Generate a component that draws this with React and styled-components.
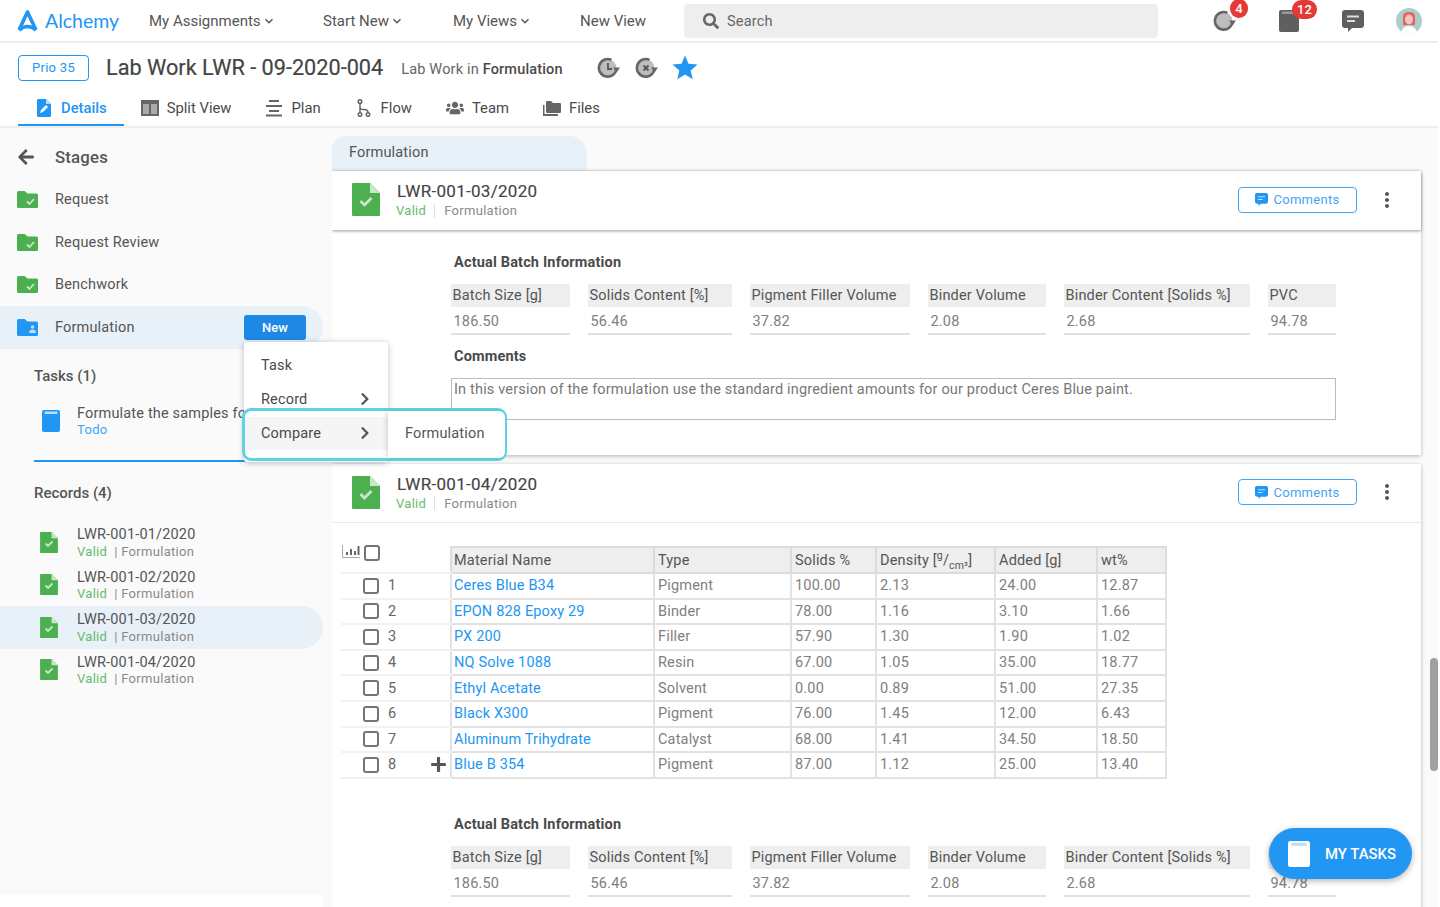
import styled, {createGlobalStyle} from "styled-components";
import {MdKeyboardArrowDown, MdMoreVert, MdStar} from "react-icons/md";
import {
  FaArrowLeft,
  FaChevronRight,
  FaPlus,
  FaSearch,
  FaUsers,
} from "react-icons/fa";

const GlobalStyle = createGlobalStyle`
  html, body {
    margin: 0;
    padding: 0;
    height: 100%;
    overflow: hidden;
    background: #fff;
  }

  body {
    font-family: Roboto, "Liberation Sans", sans-serif;
    color: #4a4a4a;
    font-size: 14.5px;
    letter-spacing: 0.17px;
  }

  * {
    box-sizing: border-box;
  }
`;

const Page = styled.div`
  position: relative;
  width: 1438px;
  height: 907px;
  overflow: hidden;
  display: flex;
  flex-direction: column;
`;

const TopBar = styled.header`
  height: 43px;
  flex: none;
  display: flex;
  align-items: center;
  border-bottom: 2px solid #eee;
  padding-left: 17px;
`;

const Logo = styled.div`
  width: 132px;
  margin-top: -1px;
  display: flex;
  align-items: center;
  gap: 7px;
  color: #2196f3;
  font-family: Lato, Roboto, sans-serif;
  font-size: 19.5px;
  letter-spacing: 0;
`;

const NavItem = styled.div`
  width: ${(p) => p.$width}px;
  display: flex;
  align-items: center;
  font-size: 15px;
  letter-spacing: 0;
  white-space: nowrap;
  color: #555;
`;

const SearchBox = styled.div`
  width: 474px;
  height: 34px;
  margin-left: -26px;
  padding-left: 19px;
  background: #eee;
  border-radius: 4px;
  display: flex;
  align-items: center;
  gap: 8px;
  color: #666;

  & span {
    margin-top: 2px;
  }
`;

const TopIcons = styled.div`
  margin-left: 55px;
  display: flex;
  align-items: center;
`;

const TopIcon = styled.div`
  position: relative;
  width: ${(p) => p.$width}px;
  display: flex;
`;

const Badge = styled.span`
  position: absolute;
  top: -10px;
  left: ${(p) => p.$left}px;
  width: ${(p) => p.$width}px;
  height: 19px;
  border-radius: 10px;
  background: #e53935;
  color: #fff;
  font-size: 13px;
  font-weight: 500;
  letter-spacing: 0;
  display: flex;
  align-items: center;
  justify-content: center;
`;

const SubHeader = styled.div`
  height: 85px;
  flex: none;
  border-bottom: 2px solid #eee;
  display: flex;
  flex-direction: column;
`;

const TitleRow = styled.div`
  height: 49px;
  padding-left: 18px;
  display: flex;
  align-items: center;
`;

const Prio = styled.div`
  width: 71px;
  height: 26px;
  border: 1px solid #2196f3;
  border-radius: 4px;
  color: #2196f3;
  font-size: 13px;
  letter-spacing: 0.3px;
  display: flex;
  align-items: center;
  justify-content: center;
`;

const PageTitle = styled.h1`
  margin: 0 0 0 17px;
  font-size: 21.7px;
  font-weight: 400;
  letter-spacing: 0;
  color: #444;
  -webkit-text-stroke: 0.2px #444;
`;

const PageState = styled.div`
  margin: 3px 0 0 18px;
  font-size: 14.5px;
  color: #666;

  & b {
    font-weight: 500;
    color: #4a4a4a;
  }
`;

const StateIcons = styled.div`
  margin-left: 34px;
  display: flex;
  align-items: center;
  gap: 14px;

  & > svg:last-child {
    margin-left: -3px;
  }
`;

const TabRow = styled.nav`
  display: flex;
  padding-left: 18px;
  height: 34px;
`;

const Tab = styled.div`
  padding: 0 17px;
  display: flex;
  align-items: center;
  gap: 8px;
  font-size: 14.8px;
  letter-spacing: 0;
  color: ${(p) => (p.$active ? "#2196f3" : "#4a4a4a")};
  border-bottom: 2px solid ${(p) => (p.$active ? "#2196f3" : "transparent")};
  font-weight: ${(p) => (p.$active ? 500 : 400)};
`;

const Content = styled.div`
  flex: 1;
  display: flex;
  min-height: 0;
  background: #fafafa;
`;

const Sidebar = styled.aside`
  width: 332px;
  flex: none;
  padding-top: 8px;
  position: relative;
  z-index: 2;

  &::after {
    content: "";
    position: absolute;
    left: 0;
    bottom: 0;
    width: 323px;
    height: 12px;
    background: #fff;
  }
`;

const StagesHead = styled.div`
  height: 42.5px;
  padding-left: 17px;
  display: flex;
  align-items: center;
  gap: 20px;
  font-size: 16.8px;
  font-weight: 500;
  color: #555;
`;

const StageRow = styled.div`
  position: relative;
  width: 323px;
  height: 42.6px;
  padding-left: 17px;
  display: flex;
  align-items: center;
  gap: 17px;
  background: ${(p) => (p.$active ? "#e8f0f8" : "transparent")};
  border-radius: 0 22px 22px 0;
  color: #555;
`;

const NewButton = styled.div`
  position: absolute;
  left: 244px;
  top: 9px;
  width: 62px;
  height: 25px;
  background: #1e88e5;
  color: #fff;
  border-radius: 3px;
  font-size: 13px;
  font-weight: 500;
  letter-spacing: 0;
  display: flex;
  align-items: center;
  justify-content: center;
`;

const Menu = styled.div`
  position: absolute;
  left: 244px;
  top: 36px;
  width: 144px;
  height: 120px;
  padding-top: 6px;
  background: #fff;
  border-radius: 3px;
  box-shadow: 0 1px 6px rgba(0, 0, 0, 0.25);
`;

const MenuItem = styled.div`
  height: 34px;
  padding: 0 16px 0 17px;
  display: flex;
  align-items: center;
  justify-content: space-between;
  color: #4a4a4a;
`;

const Highlight = styled.div`
  margin: -8px 0 0 -2px;
  width: 265px;
  height: 53px;
  border: 3px solid #5fd3e2;
  border-radius: 9px;
  display: flex;
  align-items: center;
  background: #fff;
`;

const CompareItem = styled(MenuItem)`
  width: 143px;
  height: 33px;
  margin-bottom: 3px;
  padding: 0 16px 0 16px;
  background: #f5f5f5;
`;

const SubItem = styled.div`
  align-self: stretch;
  flex: 1;
  margin-right: -1px;
  padding: 0 0 3px 17px;
  display: flex;
  align-items: center;
  background: #fff;
  border-radius: 0 6px 6px 0;
  box-shadow: -2px 0 4px rgba(0, 0, 0, 0.12);
`;

const SectionLabel = styled.div`
  padding-left: 34px;
  font-size: 15px;
  font-weight: 500;
  letter-spacing: 0;
  color: #555;
  margin-top: ${(p) => p.$top}px;
`;

const TaskItem = styled.div`
  margin: 21px 0 0 34px;
  width: 278px;
  height: 56px;
  padding: 0 0 8px 8px;
  border-bottom: 2px solid #2196f3;
  display: flex;
  align-items: flex-start;
  gap: 17px;
  white-space: nowrap;
  overflow: hidden;

  & > svg {
    margin-top: 4px;
    flex: none;
  }
`;

const ItemText = styled.div`
  display: flex;
  flex-direction: column;
  line-height: 16.5px;
  color: #555;
`;

const RecordText = styled(ItemText)`
  margin-top: 3px;
`;

const TodoText = styled.span`
  color: #42a5f5;
  font-size: 13px;
  letter-spacing: 0.3px;
`;

const RecordList = styled.div`
  margin-top: 19px;
`;

const RecordRow = styled.div`
  width: 323px;
  height: 42.6px;
  padding-left: 40px;
  display: flex;
  align-items: center;
  gap: 19px;
  background: ${(p) => (p.$active ? "#e8f0f8" : "transparent")};
  border-radius: 0 22px 22px 0;
`;

const SubLine = styled.div`
  font-size: 13px;
  letter-spacing: 0.3px;
  color: #8a8a8a;
  white-space: nowrap;
`;

const Valid = styled.span`
  color: #66bb6a;
`;

const Main = styled.main`
  flex: 1;
  min-width: 0;
  padding: 8px 17px 0 0;
  overflow: hidden;
`;

const StageTab = styled.div`
  width: 255px;
  height: 35px;
  padding: 0 0 2px 17px;
  background: #e8f0f8;
  border-radius: 14px 18px 0 0;
  display: flex;
  align-items: center;
  color: #555;
`;

const Card = styled.section`
  background: #fff;
  box-shadow: 0 1px 4px rgba(0, 0, 0, 0.28);
  margin-bottom: 9px;
`;

const CardHeader = styled.div`
  height: ${(p) => (p.$raised ? 59 : 58)}px;
  padding: 0 22px 2px 20px;
  display: flex;
  align-items: center;
  gap: 17px;
  box-shadow: ${(p) =>
    p.$raised ? "0 1px 3px rgba(0,0,0,.4)" : "0 1px 0 #e8e8e8"};
`;

const CardName = styled.div`
  font-size: 17px;
  letter-spacing: 0.3px;
  color: #444;
  margin-bottom: 2px;
  -webkit-text-stroke: 0.15px #444;
`;

const CardMeta = styled(SubLine)`
  margin-left: -1px;
  display: flex;
  align-items: center;
`;

const MetaDivider = styled.i`
  width: 1px;
  height: 14px;
  margin: 0 9px 0 8px;
  background: #ddd;
`;

const CommentsButton = styled.div`
  margin-left: auto;
  width: 119px;
  height: 26px;
  border: 1.5px solid #42a5f5;
  border-radius: 4px;
  color: #42a5f5;
  font-size: 13px;
  letter-spacing: 0.3px;
  display: flex;
  align-items: center;
  justify-content: center;
  gap: 5px;
`;

const Kebab = styled.div`
  width: 24px;
  margin-left: 1px;
  display: flex;
  justify-content: center;
  color: #555;
`;

const CardBody = styled.div`
  padding: ${(p) => p.$padding};
`;

const FieldBlock = styled.div`
  margin-left: 119px;
`;

const BlockTitle = styled.h3`
  margin: ${(p) => p.$top || 0}px 0 0;
  padding-left: 3px;
  height: 20px;
  line-height: 20px;
  font-size: 14.5px;
  font-weight: 700;
  color: #4a4a4a;
`;

const FieldGrid = styled.div`
  margin-top: 11px;
  display: grid;
  grid-template-columns: 119px 144px 160px 118px 186px 68px;
  column-gap: 18px;
`;

const FieldLabel = styled.div`
  height: 23px;
  padding-left: 1.5px;
  background: #eee;
  display: flex;
  align-items: center;
  white-space: nowrap;
  color: #555;
`;

const FieldValue = styled.div`
  margin-top: 3px;
  height: 25px;
  padding-left: 2.5px;
  border-bottom: 2px solid #e0e0e0;
  color: #808080;
  display: flex;
  align-items: center;
`;

const CommentBox = styled.div`
  margin-top: 11px;
  width: 885px;
  height: 42px;
  border: 1px solid #bbb;
  padding: 2px;
  line-height: 18px;
  color: #777;
`;

const Table = styled.table`
  margin-left: 9px;
  width: 825px;
  table-layout: fixed;
  border-collapse: collapse;
  font-weight: 400;
`;

const HeadCell = styled.th`
  height: 26px;
  padding: 0 2px 0 3px;
  background: #eee;
  border: 2px solid #dcdcdc;
  font-weight: 400;
  text-align: left;
  color: #555;
  white-space: nowrap;

  &:nth-child(2) {
    padding-left: 2px;
  }

  & sup,
  & sub {
    font-size: 10.5px;
    line-height: 0;
  }
`;

const GutterHead = styled.th`
  border-bottom: 2px solid #f2f2f2;
  padding: 0;
`;

const GutterHeadInner = styled.div`
  margin-top: -14px;
  display: flex;
  align-items: flex-start;
  gap: 4px;
  padding-left: 1px;
`;

const GutterCell = styled.td`
  height: 25.6px;
  padding: 0 3px 0 22px;
  border-bottom: 2px solid #f2f2f2;
`;

const GutterInner = styled.div`
  display: flex;
  align-items: center;
  gap: 9px;
  color: #666;
`;

const AddRow = styled.span`
  margin-left: auto;
  display: flex;
  color: #555;
`;

const Check = styled.span`
  flex: none;
  width: 16px;
  height: 16px;
  border: 2px solid #757575;
  border-radius: 3px;
`;

const DataCell = styled.td`
  height: 25.6px;
  padding: 0 2px 0 ${(p) => (p.$link ? 2 : 3)}px;
  border: 2px solid #e2e2e2;
  color: ${(p) => (p.$link ? "#2196f3" : "#808080")};
  white-space: nowrap;
`;

const Fab = styled.div`
  position: absolute;
  left: 1269px;
  top: 828px;
  width: 143px;
  height: 51px;
  padding-left: 19px;
  border-radius: 26px;
  background: #2196f3;
  color: #fff;
  font-size: 14.9px;
  font-weight: 500;
  letter-spacing: 0;
  box-shadow: 0 2px 6px rgba(0, 0, 0, 0.3);
  display: flex;
  align-items: center;
  gap: 15px;
  z-index: 3;
`;

const ScrollThumb = styled.div`
  position: absolute;
  left: 1430px;
  top: 658px;
  width: 8px;
  height: 113px;
  background: #a0a0a0;
  border-radius: 4px;
`;

function LogoMark() {
  return (
    <svg width="21" height="23" viewBox="0 0 21 23" fill="none">
      <path
        d="M2 21 10.5 3 19 21M2 21q8.500-7 17 0"
        stroke="#2196f3"
        strokeWidth="3.6"
        strokeLinejoin="round"
      />
    </svg>
  );
}

function HistoryIcon({size = 24, mark}) {
  return (
    <svg width={size} height={size} viewBox="0 0 24 24" fill="none">
      <circle cx="11" cy="12" r="8.5" fill="#bdbdbd" />
      <path
        d="M19.500 12.500a8.800 8.800 0 1 1-5-8.600"
        stroke="#666"
        strokeWidth="2.6"
      />
      <path d="M16 11.500h7l-3.500 5z" fill="#666" />
      {mark === "clock" && (
        <path d="M11 7v6h4" stroke="#555" strokeWidth="1.8" />
      )}
      {mark === "cancel" && (
        <path d="m8.500 9.500 5 5m0-5-5 5" stroke="#555" strokeWidth="1.8" />
      )}
    </svg>
  );
}

function NotebookIcon({width = 20, height = 22, color, band}) {
  return (
    <svg
      width={width}
      height={height}
      viewBox="0 0 20 22"
      preserveAspectRatio="none"
    >
      <path
        d="M2 0h16a2 2 0 0 1 2 2v18a2 2 0 0 1-2 2H2a2 2 0 0 1-2-2V2a2 2 0 0 1 2-2z"
        fill={color}
      />
      <rect x="3" y="1.500" width="14" height="2.500" fill={band} />
    </svg>
  );
}

function ChatIcon({size = 22, color, lines = "#ddd"}) {
  return (
    <svg width={size} height={size} viewBox="0 0 22 22">
      <path
        d="M3 0h16a3 3 0 0 1 3 3v12a3 3 0 0 1-3 3H10l-4 4v-4H3a3 3 0 0 1-3-3V3a3 3 0 0 1 3-3z"
        fill={color}
      />
      <path d="M5 6.500h12M5 11h8" stroke={lines} strokeWidth="1.800" />
    </svg>
  );
}

function Avatar() {
  return (
    <svg width="26" height="26" viewBox="0 0 26 26">
      <circle cx="13" cy="13" r="13" fill="#a9cfcb" />
      <path d="M7 17V9q0-5 6-5t6 5v8z" fill="#e8605f" />
      <ellipse cx="13" cy="11.500" rx="4" ry="5" fill="#f2c4be" />
      <path d="M5 24q2-6 8-6t8 6q-8 4-16 0z" fill="#fff" />
    </svg>
  );
}

function DetailsIcon() {
  return (
    <svg width="18" height="18" viewBox="0 0 18 18">
      <path
        d="M3 0h8l5 5v12a1 1 0 0 1-1 1H3a1 1 0 0 1-1-1V1a1 1 0 0 1 1-1z"
        fill="#2196f3"
      />
      <path d="M11 0l5 5h-5z" fill="#bbdefb" />
      <path d="M5 14l1-3 5-5 2 2-5 5z" fill="#fff" />
    </svg>
  );
}

function SplitIcon() {
  return (
    <svg width="18" height="16" viewBox="0 0 18 16">
      <path
        d="M0 0h18v16H0zM2 4v10h6V4zm8 0v10h6V4z"
        fill="#666"
        fillRule="evenodd"
      />
      <path d="M2 4h6v10H2zM10 4h6v10h-6z" fill="#aaa" />
    </svg>
  );
}

function PlanIcon() {
  return (
    <svg width="18" height="18" viewBox="0 0 18 18">
      <path
        d="M4 2h10M1 7h16M4 12h10M1 16.500h16"
        stroke="#666"
        strokeWidth="1.800"
      />
    </svg>
  );
}

function FlowIcon() {
  return (
    <svg width="18" height="18" viewBox="0 0 18 18" fill="none">
      <g stroke="#666" strokeWidth="1.500">
        <circle cx="5" cy="2.500" r="1.800" />
        <circle cx="5" cy="15.500" r="1.800" />
        <circle cx="13" cy="15.500" r="1.800" />
        <path d="M5 4.300v9.400M5 8.500q0 2 4 2t4 3.200" />
      </g>
    </svg>
  );
}

function FilesIcon() {
  return (
    <svg width="18" height="15" viewBox="0 0 18 15">
      <path d="M0 4h1.500v9H15v2H0z" fill="#666" />
      <path
        d="M3 1a1 1 0 0 1 1-1h4l2 2h7a1 1 0 0 1 1 1v8a1 1 0 0 1-1 1H4a1 1 0 0 1-1-1z"
        fill="#666"
      />
    </svg>
  );
}

function FolderIcon({color, glyph}) {
  return (
    <svg width="21" height="17" viewBox="0 0 21 17" style={{flex: "none"}}>
      <path
        d="M0 1.500A1.500 1.500 0 0 1 1.500 0h6l3 2.500h9A1.500 1.500 0 0 1 21 4v11.500a1.500 1.500 0 0 1-1.500 1.500h-18A1.500 1.500 0 0 1 0 15.500z"
        fill={color}
      />
      {glyph === "check" && (
        <path
          d="m10 10.500 2.500 2.500 4.500-5"
          stroke="#c8e6c9"
          strokeWidth="1.800"
          fill="none"
        />
      )}
      {glyph === "person" && (
        <g fill="#bbdefb">
          <circle cx="15.500" cy="8" r="1.800" />
          <path d="M12 14q0-3.500 3.500-3.500T19 14z" />
        </g>
      )}
    </svg>
  );
}

function DocIcon({width, height}) {
  return (
    <svg
      width={width}
      height={height}
      viewBox="0 0 28 33"
      style={{flex: "none"}}
    >
      <path
        d="M1 0h17l10 10v22a1 1 0 0 1-1 1H1a1 1 0 0 1-1-1V1a1 1 0 0 1 1-1z"
        fill="#4caf50"
      />
      <path d="M18 0l10 10H18z" fill="#c8e6c9" />
      <path
        d="m8.500 18 4 4 7-7"
        stroke="#c8e6c9"
        strokeWidth="3"
        fill="none"
      />
    </svg>
  );
}

function ChartIcon() {
  return (
    <svg width="18" height="13" viewBox="0 0 18 13">
      <path d="M.5 0v12.500H18" stroke="#aaa" fill="none" />
      <path
        d="M4 7h2v3H4zM8 4h2v6H8zM12 6h2v4h-2zM15.500 1h2v9h-2z"
        fill="#666"
      />
    </svg>
  );
}

const stages = [
  {name: "Request"},
  {name: "Request Review"},
  {name: "Benchwork"},
];

const records = [
  {name: "LWR-001-01/2020"},
  {name: "LWR-001-02/2020"},
  {name: "LWR-001-03/2020", active: true},
  {name: "LWR-001-04/2020"},
];

const fields = [
  {label: "Batch Size [g]", value: "186.50"},
  {label: "Solids Content [%]", value: "56.46"},
  {label: "Pigment Filler Volume", value: "37.82"},
  {label: "Binder Volume", value: "2.08"},
  {label: "Binder Content [Solids %]", value: "2.68"},
  {label: "PVC", value: "94.78"},
];

const materials = [
  ["Ceres Blue B34", "Pigment", "100.00", "2.13", "24.00", "12.87"],
  ["EPON 828 Epoxy 29", "Binder", "78.00", "1.16", "3.10", "1.66"],
  ["PX 200", "Filler", "57.90", "1.30", "1.90", "1.02"],
  ["NQ Solve 1088", "Resin", "67.00", "1.05", "35.00", "18.77"],
  ["Ethyl Acetate", "Solvent", "0.00", "0.89", "51.00", "27.35"],
  ["Black X300", "Pigment", "76.00", "1.45", "12.00", "6.43"],
  ["Aluminum Trihydrate", "Catalyst", "68.00", "1.41", "34.50", "18.50"],
  ["Blue B 354", "Pigment", "87.00", "1.12", "25.00", "13.40"],
];

function Fields() {
  return (
    <FieldGrid>
      {fields.map((f) => (
        <div key={f.label}>
          <FieldLabel>{f.label}</FieldLabel>
          <FieldValue>{f.value}</FieldValue>
        </div>
      ))}
    </FieldGrid>
  );
}

function RecordHeader({name, raised}) {
  return (
    <CardHeader $raised={raised}>
      <DocIcon width={28} height={33} />
      <div>
        <CardName>{name}</CardName>
        <CardMeta>
          <Valid>Valid</Valid>
          <MetaDivider />
          Formulation
        </CardMeta>
      </div>
      <CommentsButton>
        <ChatIcon size={13} color="#2196f3" lines="#bbdefb" />
        Comments
      </CommentsButton>
      <Kebab>
        <MdMoreVert size={26} />
      </Kebab>
    </CardHeader>
  );
}

function MaterialTable() {
  return (
    <Table>
      <colgroup>
        {[110, 203, 137, 85, 119, 102, 69].map((w, i) => (
          <col key={i} style={{width: w}} />
        ))}
      </colgroup>
      <thead>
        <tr>
          <GutterHead>
            <GutterHeadInner>
              <ChartIcon />
              <Check />
            </GutterHeadInner>
          </GutterHead>
          <HeadCell>Material Name</HeadCell>
          <HeadCell>Type</HeadCell>
          <HeadCell>Solids %</HeadCell>
          <HeadCell>
            Density [<sup>g</sup>/<sub>cm³</sub>]
          </HeadCell>
          <HeadCell>Added [g]</HeadCell>
          <HeadCell>wt%</HeadCell>
        </tr>
      </thead>
      <tbody>
        {materials.map((row, i) => (
          <tr key={row[0]}>
            <GutterCell>
              <GutterInner>
                <Check />
                {i + 1}
                {i === materials.length - 1 && (
                  <AddRow>
                    <FaPlus size={17} />
                  </AddRow>
                )}
              </GutterInner>
            </GutterCell>
            {row.map((cell, j) => (
              <DataCell key={j} $link={j === 0}>
                {cell}
              </DataCell>
            ))}
          </tr>
        ))}
      </tbody>
    </Table>
  );
}

export default function App() {
  return (
    <Page>
      <GlobalStyle />
      <TopBar>
        <Logo>
          <LogoMark />
          Alchemy
        </Logo>
        <NavItem $width={174}>
          My Assignments <MdKeyboardArrowDown size={16} />
        </NavItem>
        <NavItem $width={130}>
          Start New <MdKeyboardArrowDown size={16} />
        </NavItem>
        <NavItem $width={127}>
          My Views <MdKeyboardArrowDown size={16} />
        </NavItem>
        <NavItem $width={130}>New View</NavItem>
        <SearchBox>
          <FaSearch size={16} color="#666" />
          <span>Search</span>
        </SearchBox>
        <TopIcons>
          <TopIcon $width={66}>
            <HistoryIcon />
            <Badge $left={17} $width={18}>
              4
            </Badge>
          </TopIcon>
          <TopIcon $width={63}>
            <NotebookIcon color="#5f5f5f" band="#9a9a9a" />
            <Badge $left={13} $width={25}>
              12
            </Badge>
          </TopIcon>
          <TopIcon $width={54}>
            <ChatIcon color="#5f5f5f" />
          </TopIcon>
          <Avatar />
        </TopIcons>
      </TopBar>

      <SubHeader>
        <TitleRow>
          <Prio>Prio 35</Prio>
          <PageTitle>Lab Work LWR - 09-2020-004</PageTitle>
          <PageState>
            Lab Work in <b>Formulation</b>
          </PageState>
          <StateIcons>
            <HistoryIcon mark="clock" />
            <HistoryIcon mark="cancel" />
            <MdStar size={30} color="#2196f3" />
          </StateIcons>
        </TitleRow>
        <TabRow>
          <Tab $active>
            <DetailsIcon />
            Details
          </Tab>
          <Tab>
            <SplitIcon />
            Split View
          </Tab>
          <Tab>
            <PlanIcon />
            Plan
          </Tab>
          <Tab>
            <FlowIcon />
            Flow
          </Tab>
          <Tab>
            <FaUsers size={18} color="#666" />
            Team
          </Tab>
          <Tab>
            <FilesIcon />
            Files
          </Tab>
        </TabRow>
      </SubHeader>

      <Content>
        <Sidebar>
          <StagesHead>
            <FaArrowLeft size={18} color="#555" />
            Stages
          </StagesHead>
          {stages.map((s) => (
            <StageRow key={s.name}>
              <FolderIcon color="#4caf50" glyph="check" />
              {s.name}
            </StageRow>
          ))}
          <StageRow $active>
            <FolderIcon color="#2196f3" glyph="person" />
            Formulation
            <NewButton>New</NewButton>
            <Menu>
              <MenuItem>Task</MenuItem>
              <MenuItem>
                Record
                <FaChevronRight size={14} color="#555" />
              </MenuItem>
              <Highlight>
                <CompareItem>
                  Compare
                  <FaChevronRight size={14} color="#555" />
                </CompareItem>
                <SubItem>Formulation</SubItem>
              </Highlight>
            </Menu>
          </StageRow>

          <SectionLabel $top={18}>Tasks (1)</SectionLabel>
          <TaskItem>
            <NotebookIcon width={18} color="#2196f3" band="#bbdefb" />
            <ItemText>
              Formulate the samples for
              <TodoText>Todo</TodoText>
            </ItemText>
          </TaskItem>

          <SectionLabel $top={22}>Records (4)</SectionLabel>
          <RecordList>
            {records.map((r) => (
              <RecordRow key={r.name} $active={r.active}>
                <DocIcon width={18} height={21} />
                <RecordText>
                  {r.name}
                  <SubLine>
                    <Valid>Valid</Valid> &nbsp;| Formulation
                  </SubLine>
                </RecordText>
              </RecordRow>
            ))}
          </RecordList>
        </Sidebar>

        <Main>
          <StageTab>Formulation</StageTab>
          <Card>
            <RecordHeader name="LWR-001-03/2020" raised />
            <CardBody $padding="23px 0 35px">
              <FieldBlock>
                <BlockTitle>Actual Batch Information</BlockTitle>
                <Fields />
                <BlockTitle $top={12}>Comments</BlockTitle>
                <CommentBox>
                  In this version of the formulation use the standard ingredient
                  amounts for our product Ceres Blue paint.
                </CommentBox>
              </FieldBlock>
            </CardBody>
          </Card>
          <Card>
            <RecordHeader name="LWR-001-04/2020" />
            <CardBody $padding="24px 0 40px">
              <MaterialTable />
              <FieldBlock>
                <BlockTitle $top={36}>Actual Batch Information</BlockTitle>
                <Fields />
              </FieldBlock>
            </CardBody>
          </Card>
        </Main>
      </Content>

      <Fab>
        <NotebookIcon width={22} height={26} color="#fff" band="#bbdefb" />
        MY TASKS
      </Fab>
      <ScrollThumb />
    </Page>
  );
}
